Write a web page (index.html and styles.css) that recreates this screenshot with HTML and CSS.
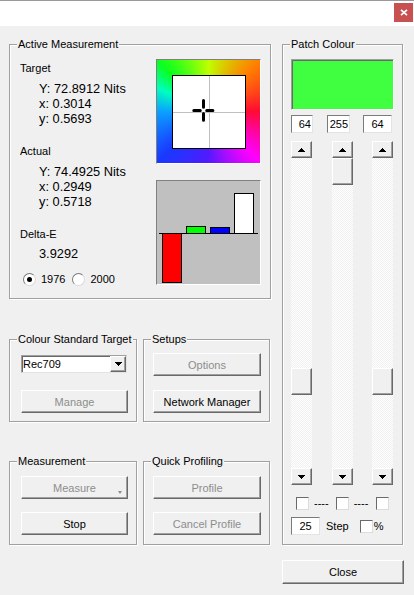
FILE: index.html
```html
<!DOCTYPE html>
<html>
<head>
<meta charset="utf-8">
<title>Measurement</title>
<link rel="stylesheet" href="styles.css">
</head>
<body>
<div class="titlebar">
  <button class="winclose" aria-label="Close window">
    <svg width="8" height="7" viewBox="0 0 8 7"><path d="M1 0.8L7 6.2M7 0.8L1 6.2" stroke="#fff" stroke-width="1.7"/></svg>
  </button>
</div>
<div class="main">
  <div class="left">
    <section class="group active">
      <span class="caption">Active Measurement</span>
      <div class="readings">
        <div class="lbl">Target</div>
        <div class="vals"><div>Y: 72.8912 Nits</div><div>x: 0.3014</div><div>y: 0.5693</div></div>
        <div class="lbl sec">Actual</div>
        <div class="vals"><div>Y: 74.4925 Nits</div><div>x: 0.2949</div><div>y: 0.5718</div></div>
        <div class="lbl sec">Delta-E</div>
        <div class="vals de"><div>3.9292</div></div>
        <div class="radios">
          <label class="opt"><span class="radio on"></span>1976</label>
          <label class="opt"><span class="radio"></span>2000</label>
        </div>
      </div>
      <div class="plots">
        <div class="gamut">
          <div class="plot">
            <svg width="72" height="72" viewBox="0 0 72 72">
              <path d="M36.5 0V72M0 36.5H72" stroke="#c0c0c0" stroke-width="1" fill="none"/>
              <path d="M30.5 24.5V31.2M30.5 37.6V44.3M20.8 34.5H27.3M33.7 34.5H39.9" stroke="#000" stroke-width="3" stroke-linecap="round" fill="none"/>
            </svg>
          </div>
        </div>
        <svg class="bars" viewBox="0 0 103 103">
          <path d="M2 52.5H101" stroke="#000" stroke-width="1"/>
          <rect x="5.5" y="52.5" width="19" height="49" fill="#ff0000" stroke="#000" stroke-width="1"/>
          <rect x="29.5" y="45.5" width="19" height="7" fill="#00ff00" stroke="#000" stroke-width="1"/>
          <rect x="53.5" y="46.5" width="19" height="6" fill="#0000ff" stroke="#000" stroke-width="1"/>
          <rect x="77.5" y="12.5" width="19" height="40" fill="#ffffff" stroke="#000" stroke-width="1"/>
        </svg>
      </div>
    </section>

    <div class="row row-mid">
      <section class="group std">
        <span class="caption">Colour Standard Target</span>
        <div class="combo">
          <span class="combo-text">Rec709</span>
          <span class="combo-btn">
            <svg width="7" height="4" viewBox="0 0 7 4"><path d="M0 0H7V1H6V2H5V3H4V4H3V3H2V2H1V1H0Z" fill="#000"/></svg>
          </span>
        </div>
        <button class="btn wide dis manage">Manage</button>
      </section>
      <section class="group setups">
        <span class="caption">Setups</span>
        <button class="btn wider dis">Options</button>
        <button class="btn wider nm">Network Manager</button>
      </section>
    </div>

    <div class="row row-bot">
      <section class="group meas">
        <span class="caption">Measurement</span>
        <button class="btn wide dis drop">Measure</button>
        <button class="btn wide stop">Stop</button>
      </section>
      <section class="group qp">
        <span class="caption">Quick Profiling</span>
        <button class="btn wider dis">Profile</button>
        <button class="btn wider dis stop">Cancel Profile</button>
      </section>
    </div>
  </div>

  <div class="right">
    <section class="group patch">
      <span class="caption">Patch Colour</span>
      <div class="swatch"></div>
      <div class="edits">
        <span class="edit e1">64</span>
        <span class="edit e2">255</span>
        <span class="edit e3">64</span>
      </div>
      <div class="scrolls">
        <div class="sb s1">
          <span class="sbtn"><svg width="7" height="4" viewBox="0 0 7 4"><path d="M3 0H4V1H5V2H6V3H7V4H0V3H1V2H2V1H3Z" fill="#000"/></svg></span>
          <div class="track"><span class="thumb" style="margin-top:210px"></span></div>
          <span class="sbtn"><svg width="7" height="4" viewBox="0 0 7 4"><path d="M0 0H7V1H6V2H5V3H4V4H3V3H2V2H1V1H0Z" fill="#000"/></svg></span>
        </div>
        <div class="sb s2">
          <span class="sbtn"><svg width="7" height="4" viewBox="0 0 7 4"><path d="M3 0H4V1H5V2H6V3H7V4H0V3H1V2H2V1H3Z" fill="#000"/></svg></span>
          <div class="track"><span class="thumb" style="margin-top:0px"></span></div>
          <span class="sbtn"><svg width="7" height="4" viewBox="0 0 7 4"><path d="M0 0H7V1H6V2H5V3H4V4H3V3H2V2H1V1H0Z" fill="#000"/></svg></span>
        </div>
        <div class="sb s3">
          <span class="sbtn"><svg width="7" height="4" viewBox="0 0 7 4"><path d="M3 0H4V1H5V2H6V3H7V4H0V3H1V2H2V1H3Z" fill="#000"/></svg></span>
          <div class="track"><span class="thumb" style="margin-top:210px"></span></div>
          <span class="sbtn"><svg width="7" height="4" viewBox="0 0 7 4"><path d="M0 0H7V1H6V2H5V3H4V4H3V3H2V2H1V1H0Z" fill="#000"/></svg></span>
        </div>
      </div>
      <div class="checks">
        <span class="cb c1"></span><span class="dash d1">----</span>
        <span class="cb c2"></span><span class="dash d2">----</span>
        <span class="cb c3"></span>
      </div>
      <div class="steprow">
        <span class="edit estep">25</span>
        <span class="steplbl">Step</span>
        <span class="cb cpct"></span>
        <span class="pct">%</span>
      </div>
    </section>
    <button class="btn close">Close</button>
  </div>
</div>
</body>
</html>
```
FILE: styles.css
```css
* { box-sizing: border-box; }
html, body { margin: 0; padding: 0; }
body {
  width: 414px;
  height: 595px;
  overflow: hidden;
  background: #f0f0f0;
  font-family: "Liberation Sans", Arial, sans-serif;
  font-size: 11px;
  color: #000;
}

/* title bar */
.titlebar {
  height: 26px;
  background: #fff;
  border-top: 1px solid #9a9a9a;
  display: flex;
  justify-content: flex-end;
  align-items: flex-start;
  padding: 2px 1px 0 0;
}
.winclose {
  width: 19px;
  height: 19px;
  padding: 0;
  border: 0;
  background: #c75050;
  display: flex;
  align-items: center;
  justify-content: center;
}
.winclose svg { display: block; }

/* main layout */
.main {
  display: grid;
  grid-template-columns: 262px 122px;
  column-gap: 11px;
  padding: 18px 0 0 9px;
}
.left { display: flex; flex-direction: column; }
.right { display: flex; flex-direction: column; align-items: flex-start; }

/* group boxes */
.group {
  position: relative;
  border: 1px solid #a0a0a0;
  box-shadow: inset 1px 1px 0 #fff, 1px 1px 0 #fff;
}
.caption {
  position: absolute;
  top: -7px;
  left: 7px;
  padding: 0 1px;
  line-height: 13px;
  background: #f0f0f0;
  white-space: nowrap;
}

/* active measurement */
.active { height: 255px; display: flex; }
.readings { width: 146px; padding: 17px 0 0 10px; }
.lbl { line-height: 13px; }
.lbl.sec { margin-top: 19px; }
.vals { font-size: 12.8px; line-height: 15px; margin: 6px 0 0 19px; }
.vals.de { margin-top: 5px; }
.radios { display: flex; align-items: center; height: 13px; margin-top: 12px; }
.opt { display: flex; align-items: center; line-height: 13px; }
.opt + .opt { margin-left: 7px; }
.radio {
  width: 13px;
  height: 13px;
  margin: 0 5px 0 0;
  border-radius: 50%;
  background: #fff;
  border: 1px solid;
  border-color: #7a7a7a #d8d8d8 #d8d8d8 #7a7a7a;
  display: flex;
  align-items: center;
  justify-content: center;
}
.opt:first-child .radio { margin-left: 3px; }
.radio.on::after {
  content: "";
  width: 5px;
  height: 5px;
  border-radius: 50%;
  background: #000;
}

.plots { padding-top: 14px; display: flex; flex-direction: column; gap: 16px; }
.gamut {
  width: 105px;
  height: 105px;
  padding: 15px 0 0 15px;
  border: 1px solid;
  border-color: #808080 #fff #fff #808080;
  background: conic-gradient(from -45deg at 50% 50%,
    hsl(125 100% 52%) 0deg,
    hsl(75 100% 50%) 45deg,
    hsl(30 100% 50%) 90deg,
    hsl(350 100% 52%) 135deg,
    hsl(300 100% 50%) 180deg,
    hsl(255 100% 55%) 225deg,
    hsl(232 100% 55%) 270deg,
    hsl(203 100% 52%) 315deg,
    hsl(165 100% 50%) 340deg,
    hsl(125 100% 52%) 360deg);
}
.plot {
  width: 74px;
  height: 74px;
  border: 1px solid #000;
  background: #fff;
}
.plot svg { display: block; }
.bars {
  display: block;
  width: 105px;
  height: 105px;
  border: 1px solid;
  border-color: #808080 #fff #fff #808080;
  background: #c0c0c0;
}

/* lower rows */
.row { display: grid; grid-template-columns: 128px 127px; column-gap: 6px; }
.row-mid { margin-top: 40px; height: 83px; }
.row-bot { margin-top: 39px; height: 84px; }
.row .group { display: flex; flex-direction: column; align-items: flex-start; }
.std { padding: 15px 0 0 11px; }
.setups { padding: 13px 0 0 9px; }
.meas, .qp { padding: 14px 0 0 11px; }
.qp { padding-left: 9px; }

.btn {
  font: inherit;
  color: #000;
  height: 23px;
  padding: 0;
  background: #f0f0f0;
  border: 1px solid;
  border-color: #fff #696969 #696969 #fff;
  box-shadow: inset -1px -1px 0 #a0a0a0;
  position: relative;
}
.btn.dis { color: #8d8d8d; }
.btn.wide { width: 107px; }
.btn.wider { width: 108px; }
.manage { margin-top: 17px; }
.nm { margin-top: 14px; }
.stop { margin-top: 13px; }
.drop::after {
  content: "";
  position: absolute;
  right: 5px;
  bottom: 4px;
  border-left: 2.5px solid transparent;
  border-right: 2.5px solid transparent;
  border-top: 3px solid #8d8d8d;
}

.combo {
  width: 106px;
  height: 18px;
  background: #fff;
  border: 1px solid;
  border-color: #a0a0a0 #e3e3e3 #e3e3e3 #a0a0a0;
  box-shadow: inset 1px 1px 0 #696969;
  display: flex;
  align-items: center;
  justify-content: space-between;
  padding-left: 1px;
}
.combo-text { line-height: 13px; }
.combo-btn {
  width: 16px;
  height: 16px;
  background: #f0f0f0;
  border: 1px solid;
  border-color: #fff #696969 #696969 #fff;
  box-shadow: inset -1px -1px 0 #a0a0a0;
  display: flex;
  align-items: center;
  justify-content: center;
}
.combo-btn svg, .sbtn svg { display: block; }

/* patch colour */
.patch {
  width: 121px;
  height: 501px;
  padding: 14px 0 0 8px;
  display: flex;
  flex-direction: column;
  align-items: flex-start;
}
.swatch {
  width: 103px;
  height: 51px;
  background: #40ff40;
  border: 1px solid;
  border-color: #a0a0a0 #fff #fff #a0a0a0;
  box-shadow: inset 1px 1px 0 #696969;
}
.edits { display: flex; margin-top: 5px; }
.edit {
  display: block;
  height: 18px;
  line-height: 16px;
  background: #fff;
  border: 1px solid;
  border-color: #7a7a7a #e3e3e3 #e3e3e3 #7a7a7a;
  text-align: center;
}
.e1 { width: 22px; text-align: right; padding-right: 1px; margin-right: 14px; }
.e2 { width: 23px; text-align: right; padding-right: 1px; margin-right: 13px; }
.e3 { width: 29px; }

.scrolls { display: flex; height: 344px; margin-top: 8px; }
.sb { width: 21px; display: flex; flex-direction: column; }
.s2 { margin-left: 20px; }
.s3 { margin-left: 19px; }
.sbtn, .thumb {
  display: flex;
  align-items: center;
  justify-content: center;
  background: #f0f0f0;
  border: 1px solid;
  border-color: #fff #696969 #696969 #fff;
  box-shadow: inset -1px -1px 0 #a0a0a0;
}
.sbtn { height: 17px; flex: none; }
.track {
  flex: 1;
  display: flex;
  flex-direction: column;
  background-color: #f7f7f7;
  background-image: repeating-conic-gradient(#ffffff 0 25%, #f0f0f0 0 50%);
  background-size: 2px 2px;
}
.thumb { height: 27px; flex: none; }

.checks { display: flex; align-items: center; height: 13px; margin-top: 12px; padding-left: 5px; }
.cb {
  display: block;
  width: 13px;
  height: 13px;
  background: #fff;
  border: 1px solid;
  border-color: #6a6a6a #dcdcdc #dcdcdc #6a6a6a;
  flex: none;
}
.dash { line-height: 13px; margin-left: 5px; }
.d1 { margin-right: 7px; }
.d2 { margin-right: 8px; }

.steprow { display: flex; align-items: center; height: 18px; margin-top: 7px; }
.estep { width: 29px; }
.steplbl { margin-left: 6px; line-height: 13px; }
.cpct { margin-left: 11px; }
.pct { margin-left: 1px; line-height: 13px; }

.close { width: 122px; height: 24px; margin-top: 15px; }
```
